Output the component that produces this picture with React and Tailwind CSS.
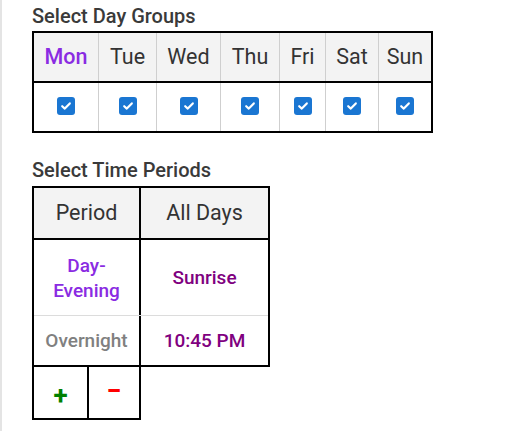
import React from "react";

const days = [
  { d: "Mon", w: "w-[64px]", active: true },
  { d: "Tue", w: "w-[58px]" },
  { d: "Wed", w: "w-[64px]" },
  { d: "Thu", w: "w-[59px]" },
  { d: "Fri", w: "w-[46px]" },
  { d: "Sat", w: "w-[53px]" },
  { d: "Sun", w: "w-[53px]" },
];

function Check() {
  return (
    <span className="flex h-[18px] w-[18px] items-center justify-center rounded-[3px] bg-[#1a76d2]">
      <svg width="12" height="12" viewBox="0 0 12 12" fill="none">
        <path d="M2.2 6.2 L4.8 8.6 L9.8 3.4" stroke="white" strokeWidth="2.2" strokeLinecap="round" strokeLinejoin="round" />
      </svg>
    </span>
  );
}

export default function App() {
  return (
    <div className="min-h-[431px] w-[520px] border-l-2 border-[#e4e4e4] bg-white pl-[30px] pt-[4px] font-['Roboto',sans-serif] text-[#333]">
      <div className="mb-[3px] text-[20px] font-medium leading-[24px] text-[#3a3a3a]">Select Day Groups</div>
      <div className="w-[401px] border-2 border-black">
        <div className="flex h-[50px] border-b-2 border-black bg-[#f3f3f3]">
          {days.map((x, i) => (
            <div
              key={x.d}
              className={`${x.w} flex items-center justify-center text-[21.5px] ${i > 0 ? "border-l border-[#cfcfcf]" : ""} ${x.active ? "font-medium text-[#8a2be2]" : ""}`}
            >
              {x.d}
            </div>
          ))}
        </div>
        <div className="flex h-[48px]">
          {days.map((x, i) => (
            <div
              key={x.d}
              className={`${x.w} flex items-center justify-center pb-[3px] ${i > 0 ? "border-l border-[#cfcfcf]" : ""}`}
            >
              <Check />
            </div>
          ))}
        </div>
      </div>

      <div className="mb-[4px] mt-[25px] text-[20px] font-medium leading-[24px] text-[#3a3a3a]">Select Time Periods</div>
      <div className="w-[238px] border-2 border-black">
        <div className="flex h-[52px] border-b-2 border-black bg-[#f3f3f3] text-[21.5px]">
          <div className="flex w-[105px] items-center justify-center">Period</div>
          <div className="flex flex-1 items-center justify-center border-l-2 border-black">All Days</div>
        </div>
        <div className="flex h-[76px] border-b border-[#dcdcdc] text-[19px] font-medium leading-[25px]">
          <div className="flex w-[105px] items-center justify-center text-center text-[#8a2be2]">
            Day-<br />Evening
          </div>
          <div className="flex flex-1 items-center justify-center border-l-2 border-black text-[#800080]">Sunrise</div>
        </div>
        <div className="flex h-[49px] text-[19px] font-medium leading-[25px]">
          <div className="flex w-[105px] items-center justify-center text-[#808080]">Overnight</div>
          <div className="flex flex-1 items-center justify-center border-l-2 border-black text-[#800080]">10:45 PM</div>
        </div>
      </div>
      <div className="flex h-[53px] w-[109px] border-x-2 border-b-2 border-black">
        <div className="flex w-[53px] items-center justify-center pt-[5px] text-[26px] font-bold leading-none text-[#008000]">+</div>
        <div className="flex flex-1 items-center justify-center border-l-2 border-black pb-[2px] text-[27px] font-bold leading-none text-[#ff0000]">−</div>
      </div>
    </div>
  );
}
